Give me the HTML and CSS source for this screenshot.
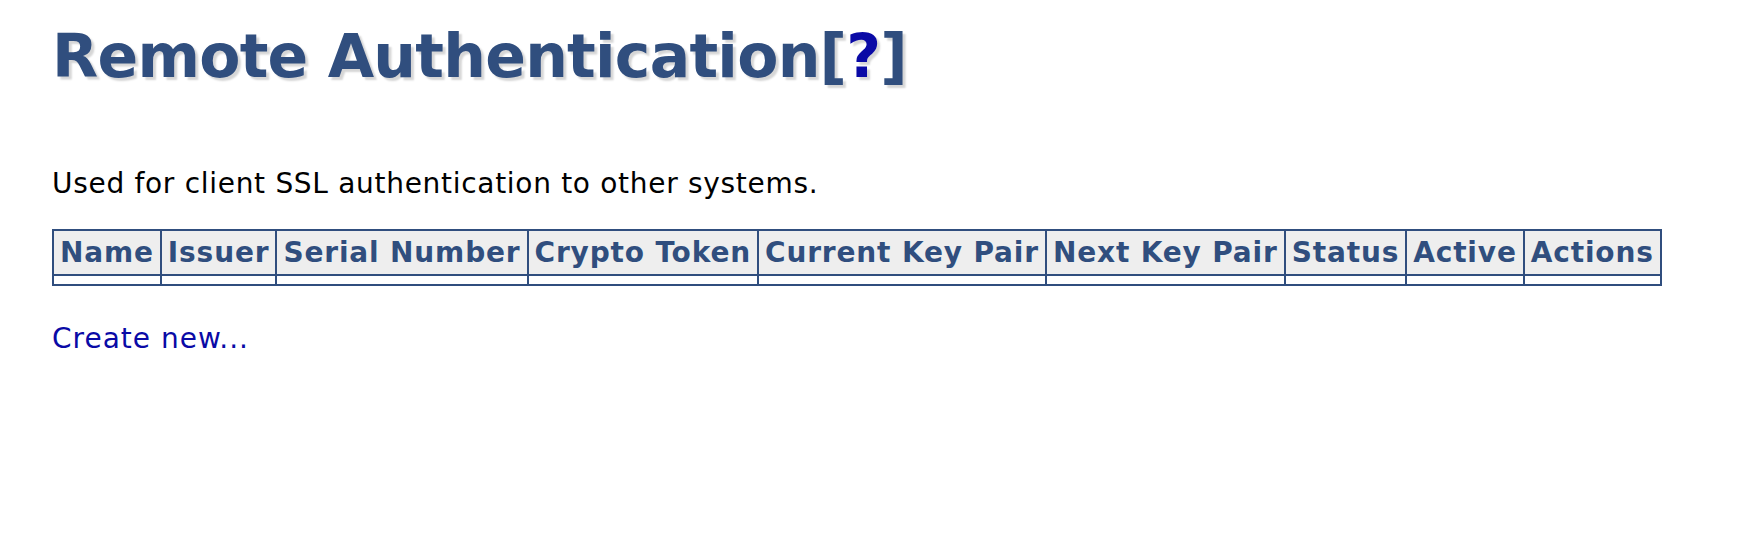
FILE: index.html
```html
<!DOCTYPE html>
<html lang="en">
<head>
  <meta charset="UTF-8">
  <title>Remote Authentication</title>
  <link rel="stylesheet" href="styles.css">
</head>
<body>
  <div class="page">
    <h1>Remote Authentication<span class="help">[<a href="#">?</a>]</span></h1>

    <p class="intro">Used for client SSL authentication to other systems.</p>

    <table class="grid">
      <thead>
        <tr>
          <th>Name</th>
          <th>Issuer</th>
          <th>Serial Number</th>
          <th>Crypto Token</th>
          <th>Current Key Pair</th>
          <th>Next Key Pair</th>
          <th>Status</th>
          <th>Active</th>
          <th>Actions</th>
        </tr>
      </thead>
      <tbody>
        <tr>
          <td></td><td></td><td></td><td></td><td></td><td></td><td></td><td></td><td></td>
        </tr>
      </tbody>
    </table>

    <p class="create"><a href="#">Create new...</a></p>
  </div>
</body>
</html>
```

FILE: styles.css
```css
body {
  margin: 0;
  background: #fff;
  font-family: "DejaVu Sans", Verdana, sans-serif;
  color: #000;
}

.page {
  padding: 0 52px;
}

h1 {
  margin: 0;
  padding-top: 20px;
  font-size: 60px;
  font-weight: bold;
  letter-spacing: -0.75px;
  color: #304e7e;
  text-shadow: 3px 3px 2px #d6d6d6;
  line-height: 72px;
}

.help a {
  color: #0a0aa6;
  text-decoration: none;
}

.intro {
  margin: 75px 0 0;
  font-size: 28px;
  letter-spacing: 0.7px;
  line-height: 34px;
}

.grid {
  margin-top: 28px;
  border-collapse: collapse;
  border: 2px solid #304e7e;
}

.grid th,
.grid td {
  border: 2px solid #304e7e;
  padding: 2px 6px;
}

.grid th {
  background: #eee;
  color: #304e7e;
  font-size: 28px;
  font-weight: bold;
  letter-spacing: 0.84px;
  line-height: 39px;
  white-space: nowrap;
}

.grid td {
  height: 8px;
  padding: 0;
}

.create {
  margin: 36px 0 0;
  font-size: 28px;
  letter-spacing: 1px;
  line-height: 34px;
}

.create a {
  color: #0a0aa6;
  text-decoration: none;
}
```
